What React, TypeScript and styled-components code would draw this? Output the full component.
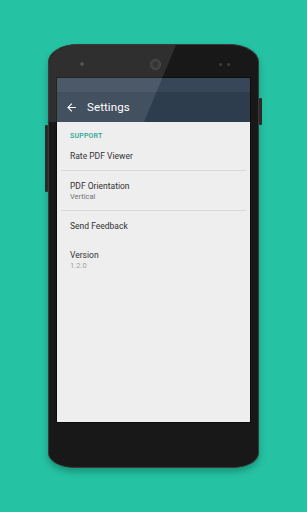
import React from "react";
import styled, { createGlobalStyle } from "styled-components";

const Global = createGlobalStyle`
  html, body { margin: 0; padding: 0; }
  body { width: 307px; height: 512px; overflow: hidden; background: #25c3a3; font-family: Roboto, "Noto Sans", sans-serif; }
`;

const Page = styled.div`
  width: 307px;
  height: 512px;
  background: #25c3a3;
  display: flex;
  justify-content: center;
  align-items: flex-start;
  box-sizing: border-box;
  padding-top: 44px;
`;

const Phone = styled.div`
  position: relative;
  width: 211px;
  height: 424px;
  box-sizing: border-box;
  background: #181818;
  border: 1px solid #3a3a3a;
  border-radius: 30px 30px 26px 26px / 18px 18px 15px 15px;
  box-shadow: 0 4px 6px rgba(0, 60, 45, 0.35);
  display: flex;
  flex-direction: column;
`;

const Glare = styled.div`
  position: absolute;
  top: 0;
  left: 0;
  right: 0;
  height: 77px;
  background: rgba(255, 255, 255, 0.1);
  clip-path: polygon(0 0, 127px 0, 95px 100%, 0 100%);
  border-top-left-radius: 30px 18px;
  pointer-events: none;
  z-index: 2;
`;

const SideButton = styled.div<{ $side: "left" | "right"; $top: number; $h: number }>`
  position: absolute;
  ${(p) => (p.$side === "left" ? "left: -4px;" : "right: -4px;")}
  top: ${(p) => p.$top}px;
  width: 3px;
  height: ${(p) => p.$h}px;
  background: #2a2a2a;
  border-radius: 1px;
`;

const TopBezel = styled.div`
  height: 33px;
  box-sizing: border-box;
  padding: 5px 28px 0 31px;
  display: grid;
  grid-template-columns: 1fr auto 1fr;
  align-items: center;
`;

const Dot = styled.div<{ $size: number }>`
  width: ${(p) => p.$size}px;
  height: ${(p) => p.$size}px;
  border-radius: 50%;
  background: #3c3f44;
`;

const Sensors = styled.div`
  justify-self: end;
  display: flex;
  gap: 5px;
`;

const Camera = styled.div`
  width: 11px;
  height: 11px;
  box-sizing: border-box;
  border-radius: 50%;
  border: 1px solid #3e3e3e;
  background: radial-gradient(circle, #1c1c1c 30%, #2c2c2c 55%, #111 100%);
`;

const Screen = styled.div`
  margin: 0 8px;
  width: 193px;
  height: 344px;
  display: flex;
  flex-direction: column;
  background: #eeeeee;
  box-shadow: 0 0 0 1px #0c0c0c;
`;

const StatusBar = styled.div`
  height: 14px;
  background: #374759;
`;

const Toolbar = styled.div`
  height: 30px;
  background: #2e3d4e;
  display: flex;
  align-items: center;
  padding-left: 8px;
  gap: 9px;
  color: #ffffff;
`;

const Title = styled.span`
  font-size: 11.5px;
  font-weight: 400;
  letter-spacing: 0.1px;
`;

const List = styled.div`
  flex: 1;
  display: flex;
  flex-direction: column;
`;

const Category = styled.div`
  padding: 10px 13px 1px;
  font-size: 7px;
  line-height: 8px;
  color: #22a592;
  font-weight: 500;
  letter-spacing: 0.2px;
`;

const Item = styled.div`
  padding: 10px 13px 9px;
  display: flex;
  flex-direction: column;
`;

const ItemTitle = styled.div`
  font-size: 8.5px;
  line-height: 10px;
  color: #333333;
`;

const ItemSummary = styled.div<{ $muted?: boolean }>`
  font-size: 7.5px;
  line-height: 11px;
  margin-bottom: -1px;
  color: ${(p) => (p.$muted ? "#a2a2a2" : "#727272")};
`;

const Divider = styled.div`
  height: 1px;
  margin: 0 4px;
  background: #d9d9d9;
`;

const BackArrow = () => (
  <svg width="13" height="13" viewBox="0 0 24 24" fill="#ffffff">
    <path d="M20 11H7.83l5.59-5.59L12 4l-8 8 8 8 1.41-1.41L7.83 13H20v-2z" />
  </svg>
);

export default function App() {
  return (
    <>
      <Global />
      <Page>
        <Phone>
          <Glare />
          <SideButton $side="left" $top={80} $h={67} />
          <SideButton $side="right" $top={53} $h={27} />
          <TopBezel>
            <Dot $size={4} />
            <Camera />
            <Sensors>
              <Dot $size={3} />
              <Dot $size={3} />
            </Sensors>
          </TopBezel>
          <Screen>
            <StatusBar />
            <Toolbar>
              <BackArrow />
              <Title>Settings</Title>
            </Toolbar>
            <List>
              <Category>SUPPORT</Category>
              <Item>
                <ItemTitle>Rate PDF Viewer</ItemTitle>
              </Item>
              <Divider />
              <Item>
                <ItemTitle>PDF Orientation</ItemTitle>
                <ItemSummary>Vertical</ItemSummary>
              </Item>
              <Divider />
              <Item>
                <ItemTitle>Send Feedback</ItemTitle>
              </Item>
              <Item>
                <ItemTitle>Version</ItemTitle>
                <ItemSummary $muted>1.2.0</ItemSummary>
              </Item>
            </List>
          </Screen>
        </Phone>
      </Page>
    </>
  );
}
